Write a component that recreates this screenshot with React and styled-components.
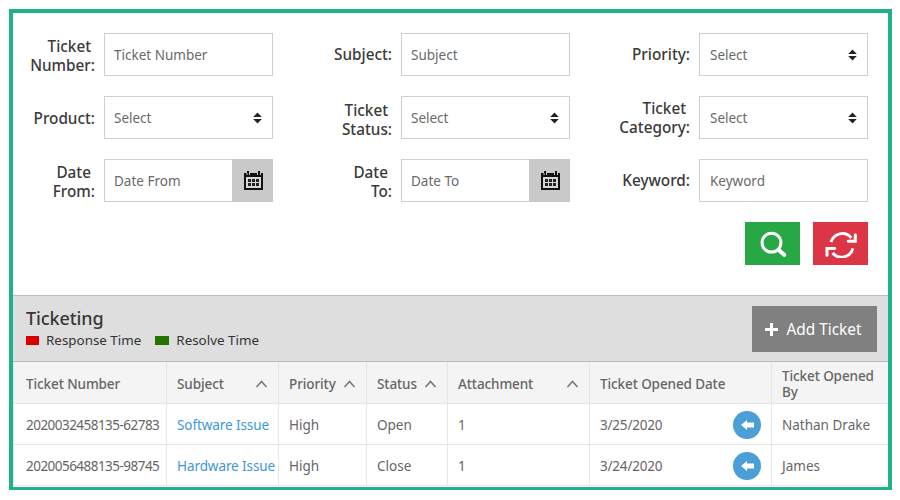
import React from "react"
import styled, { createGlobalStyle } from "styled-components"

const GlobalStyle = createGlobalStyle`
  html, body {
    margin: 0;
    padding: 0;
    background: #fff;
  }
  body {
    font-family: "Noto Sans", "Open Sans", sans-serif;
    color: #555;
  }
`

const Frame = styled.div`
  box-sizing: border-box;
  width: 883px;
  height: 481px;
  margin: 9px 0 0 9px;
  border: 4px solid #20b08a;
  border-bottom-width: 3px;
  overflow: hidden;
`

const FormGrid = styled.div`
  display: grid;
  grid-template-columns: 260px 297px 298px;
  row-gap: 20px;
  padding: 20px 20px 0 0;
`

const Field = styled.div`
  display: flex;
  justify-content: flex-end;
  align-items: center;
  gap: 9px;
`

const Label = styled.label`
  padding-top: ${(props) => props.$nudge || 0}px;
  font-size: 15.3px;
  font-weight: 500;
  line-height: 19px;
  color: #3a3a3a;
  text-align: right;
  white-space: nowrap;
`

const Control = styled.div`
  box-sizing: border-box;
  display: flex;
  align-items: center;
  justify-content: space-between;
  width: 169px;
  height: 43px;
  border: 1px solid #cfcfcf;
  background: #fff;
`

const Placeholder = styled.span`
  padding-left: ${(props) => props.$pad || 9}px;
  font-size: 13.5px;
  color: #6a6a6a;
`

const SortArrows = styled.svg`
  width: 9px;
  height: 12px;
  margin-right: 10px;
`

const CalendarBox = styled.div`
  display: flex;
  align-items: center;
  justify-content: center;
  width: 41px;
  height: 43px;
  margin: -1px;
  padding-left: 2px;
  box-sizing: border-box;
  background: #c9c9c9;
`

const Actions = styled.div`
  display: flex;
  justify-content: flex-end;
  gap: 13px;
  margin-top: 20px;
  padding-right: 20px;
`

const ActionButton = styled.button`
  display: flex;
  align-items: center;
  justify-content: center;
  width: 55px;
  height: 43px;
  padding: 0;
  border: 0;
  background: ${(props) => props.$bg};
`

const PanelHead = styled.div`
  box-sizing: border-box;
  display: flex;
  justify-content: space-between;
  height: 67px;
  margin-top: 30px;
  padding: 10px 11px 0 13px;
  border-top: 1px solid #bdbdbd;
  border-bottom: 1px solid #bdbdbd;
  background: #dedede;
`

const Title = styled.div`
  font-size: 18px;
  font-weight: 500;
  line-height: 24px;
  letter-spacing: -0.1px;
  color: #383838;
`

const Legend = styled.div`
  display: flex;
  align-items: center;
  font-size: 13.4px;
  line-height: 20px;
  color: #333;
`

const Swatch = styled.span`
  width: ${(props) => props.$w}px;
  height: 9px;
  margin-right: 7px;
  background: ${(props) => props.$color};
`

const LegendText = styled.span`
  margin-right: 14px;
`

const AddButton = styled.button`
  display: flex;
  align-items: center;
  justify-content: center;
  gap: 8px;
  width: 125px;
  height: 46px;
  padding: 0 2px 0 0;
  border: 0;
  background: #808080;
  color: #fff;
  font-family: inherit;
  font-size: 15.4px;
`

const Table = styled.table`
  table-layout: fixed;
  width: 875px;
  border-collapse: collapse;
  border-left: 1px solid #e6e6e6;
  border-right: 1px solid #c4c4c4;
  border-bottom: 1px solid #c4c4c4;
`

const Th = styled.th`
  box-sizing: border-box;
  height: 41px;
  padding: 3px 10px 0;
  border: 1px solid #e6e6e6;
  border-top: 0;
  background: #f4f4f4;
  font-size: 13.5px;
  font-weight: 500;
  line-height: 16px;
  letter-spacing: -0.1px;
  color: #666;
  text-align: left;

  &:first-child {
    padding-left: 12px;
  }
`

const HeadInner = styled.div`
  display: flex;
  align-items: center;
  justify-content: space-between;
`

const Chevron = styled.svg`
  width: 13px;
  height: 8px;
  flex: none;
`

const Td = styled.td`
  box-sizing: border-box;
  height: 41px;
  padding: 2px 10px 0;
  border: 1px solid #e6e6e6;
  font-size: 13.5px;
  color: #666;
  white-space: nowrap;

  &:first-child {
    padding-left: 12px;
    letter-spacing: -0.53px;
  }
`

const SubjectLink = styled.a`
  letter-spacing: -0.08px;
  color: #3d97d8;
`

const DateCell = styled.div`
  display: flex;
  align-items: center;
  justify-content: space-between;
  letter-spacing: -0.2px;
`

const RoundArrow = styled.span`
  display: flex;
  align-items: center;
  justify-content: center;
  width: 28px;
  height: 28px;
  border-radius: 50%;
  background: #4a9fd6;
`

const columns = [153, 112, 88, 81, 142, 182, 117]

const rows = [
  { number: "2020032458135-62783", subject: "Software Issue", priority: "High", status: "Open", date: "3/25/2020", by: "Nathan Drake" },
  { number: "2020056488135-98745", subject: "Hardware Issue", priority: "High", status: "Close", date: "3/24/2020", by: "James" },
]

function SelectArrows() {
  return (
    <SortArrows viewBox="0 0 9 12">
      <path d="M4.5 0.5 L8.8 5 H0.2 Z M4.5 11.5 L8.8 7 H0.2 Z" fill="#222" />
    </SortArrows>
  )
}

function CalendarIcon() {
  return (
    <svg width="19" height="19" viewBox="0 0 19 19">
      <path d="M0 2 H3 V0 H5 V2 H14 V0 H16 V2 H19 V19 H0 Z" fill="#111" />
      <rect x="2.5" y="2" width="1" height="2" fill="#c9c9c9" />
      <rect x="5" y="2" width="1" height="2" fill="#c9c9c9" />
      <rect x="13" y="2" width="1" height="2" fill="#c9c9c9" />
      <rect x="16" y="2" width="1" height="2" fill="#c9c9c9" />
      <rect x="2" y="6" width="15" height="11" fill="#d6d6d6" />
      <g fill="#222">
        <rect x="4" y="8" width="3" height="3" />
        <rect x="8" y="8" width="3" height="3" />
        <rect x="12" y="8" width="3" height="3" />
        <rect x="4" y="12" width="3" height="3" />
        <rect x="8" y="12" width="3" height="3" />
        <rect x="12" y="12" width="3" height="3" />
      </g>
    </svg>
  )
}

function SearchIcon() {
  return (
    <svg width="28" height="28" viewBox="0 0 28 28" fill="none" stroke="#fff">
      <circle cx="12.5" cy="12.7" r="9.4" strokeWidth="3" />
      <path d="M19.7 19.9 L25.2 24.8" strokeWidth="4" strokeLinecap="round" />
    </svg>
  )
}

function SyncIcon() {
  return (
    <svg width="32" height="28" viewBox="0 0 34 30" fill="none" stroke="#fff" strokeWidth="3.2">
      <path d="M6.3 13 A12.5 12.5 0 0 1 28 8.5" />
      <path d="M32.3 5.3 V12 H24.7" strokeLinecap="round" />
      <path d="M29.7 19.7 A12.5 12.5 0 0 1 8 24.7" />
      <path d="M2 27.3 V19.7 H10.3" strokeLinecap="round" />
    </svg>
  )
}

function HeadCell({ children, sort }) {
  return (
    <Th>
      <HeadInner>
        <span>{children}</span>
        {sort && (
          <Chevron viewBox="0 0 13 8" fill="none" stroke="#777" strokeWidth="1.6">
            <path d="M1.5 7 L6.5 1.5 L11.5 7" />
          </Chevron>
        )}
      </HeadInner>
    </Th>
  )
}

function App() {
  return (
    <>
      <GlobalStyle />
      <Frame>
        <FormGrid>
          <Field>
            <Label $nudge={2}>Ticket&nbsp;<br />Number:</Label>
            <Control><Placeholder>Ticket Number</Placeholder></Control>
          </Field>
          <Field>
            <Label>Subject:</Label>
            <Control><Placeholder>Subject</Placeholder></Control>
          </Field>
          <Field>
            <Label>Priority:</Label>
            <Control><Placeholder $pad={10}>Select</Placeholder><SelectArrows /></Control>
          </Field>
          <Field>
            <Label $nudge={2}>Product:</Label>
            <Control><Placeholder>Select</Placeholder><SelectArrows /></Control>
          </Field>
          <Field>
            <Label $nudge={4}>Ticket&nbsp;<br />Status:</Label>
            <Control><Placeholder>Select</Placeholder><SelectArrows /></Control>
          </Field>
          <Field>
            <Label>Ticket&nbsp;<br />Category:</Label>
            <Control><Placeholder $pad={10}>Select</Placeholder><SelectArrows /></Control>
          </Field>
          <Field>
            <Label $nudge={2}>Date&nbsp;<br />From:</Label>
            <Control>
              <Placeholder>Date From</Placeholder>
              <CalendarBox><CalendarIcon /></CalendarBox>
            </Control>
          </Field>
          <Field>
            <Label $nudge={2}>Date&nbsp;<br />To:</Label>
            <Control>
              <Placeholder>Date To</Placeholder>
              <CalendarBox><CalendarIcon /></CalendarBox>
            </Control>
          </Field>
          <Field>
            <Label>Keyword:</Label>
            <Control><Placeholder $pad={10}>Keyword</Placeholder></Control>
          </Field>
        </FormGrid>

        <Actions>
          <ActionButton $bg="#28a745"><SearchIcon /></ActionButton>
          <ActionButton $bg="#dc3545"><SyncIcon /></ActionButton>
        </Actions>

        <PanelHead>
          <div>
            <Title>Ticketing</Title>
            <Legend>
              <Swatch $w={13} $color="#d90000" />
              <LegendText>Response Time</LegendText>
              <Swatch $w={14} $color="#267300" />
              <LegendText>Resolve Time</LegendText>
            </Legend>
          </div>
          <AddButton>
            <svg width="13" height="13" viewBox="0 0 13 13">
              <path d="M5 0 H8 V5 H13 V8 H8 V13 H5 V8 H0 V5 H5 Z" fill="#fff" />
            </svg>
            Add Ticket
          </AddButton>
        </PanelHead>

        <Table>
          <colgroup>
            {columns.map((width, i) => (
              <col key={i} style={{ width }} />
            ))}
          </colgroup>
          <thead>
            <tr>
              <HeadCell>Ticket Number</HeadCell>
              <HeadCell sort>Subject</HeadCell>
              <HeadCell sort>Priority</HeadCell>
              <HeadCell sort>Status</HeadCell>
              <HeadCell sort>Attachment</HeadCell>
              <HeadCell>Ticket Opened Date</HeadCell>
              <HeadCell>Ticket Opened By</HeadCell>
            </tr>
          </thead>
          <tbody>
            {rows.map((row) => (
              <tr key={row.number}>
                <Td>{row.number}</Td>
                <Td><SubjectLink>{row.subject}</SubjectLink></Td>
                <Td>{row.priority}</Td>
                <Td>{row.status}</Td>
                <Td>1</Td>
                <Td>
                  <DateCell>
                    {row.date}
                    <RoundArrow>
                      <svg width="13" height="10" viewBox="0 0 13 10">
                        <path d="M0 5 L6 0 V2.5 H13 V7.5 H6 V10 Z" fill="#fff" />
                      </svg>
                    </RoundArrow>
                  </DateCell>
                </Td>
                <Td>{row.by}</Td>
              </tr>
            ))}
          </tbody>
        </Table>
      </Frame>
    </>
  )
}

export default App
